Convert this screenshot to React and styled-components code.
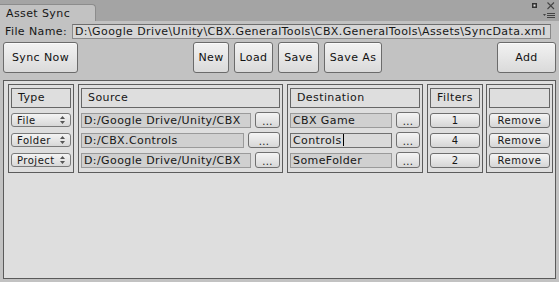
import React from "react";
import styled, { createGlobalStyle } from "styled-components";

const Global = createGlobalStyle`
  html, body { margin: 0; padding: 0; }
  body {
    width: 559px;
    height: 282px;
    overflow: hidden;
    font-family: "DejaVu Sans", Verdana, sans-serif;
    color: #161616;
  }
`;

const rows = [
  { type: "File", source: "D:/Google Drive/Unity/CBX", dest: "CBX Game", filters: 1, wide: false },
  { type: "Folder", source: "D:/CBX.Controls", dest: "Controls", filters: 4, wide: true, caret: true },
  { type: "Project", source: "D:/Google Drive/Unity/CBX", dest: "SomeFolder", filters: 2, wide: false },
];

function SortArrows() {
  return (
    <svg width="5" height="8" viewBox="0 0 5 8">
      <path d="M2.5 0 L5 3 L0 3 Z M0 5 L5 5 L2.5 8 Z" fill="#555" />
    </svg>
  );
}

function WindowIcons() {
  return (
    <IconBox>
      <svg width="28" height="20" viewBox="0 0 28 20">
        <rect x="3.5" y="3.5" width="4" height="4" fill="#333" stroke="#333" />
        <rect x="4.5" y="4.5" width="2" height="2" fill="#ddd" />
        <path d="M18.5 2.5 L25 9 M25 2.5 L18.5 9" stroke="#444" strokeWidth="1.1" />
        <path d="M14 14 L17 14 L15.5 16 Z" fill="#444" />
        <path d="M18 13.5 H26 M18 15.5 H26 M18 17.5 H26" stroke="#444" strokeWidth="1" />
      </svg>
    </IconBox>
  );
}

export default function App() {
  return (
    <Window>
      <Global />
      <TitleBar>
        <Tab>Asset Sync</Tab>
        <WindowIcons />
      </TitleBar>
      <FileRow>
        <Label>File Name:</Label>
        <PathField>D:\Google Drive\Unity\CBX.GeneralTools\CBX.GeneralTools\Assets\SyncData.xml</PathField>
      </FileRow>
      <Toolbar>
        <BigButton $w={75}>Sync Now</BigButton>
        <ButtonGroup>
          <BigButton $w={36}>New</BigButton>
          <BigButton $w={39}>Load</BigButton>
          <BigButton $w={41}>Save</BigButton>
          <BigButton $w={58}>Save As</BigButton>
        </ButtonGroup>
        <BigButton $w={59} $right>Add</BigButton>
      </Toolbar>
      <Panel>
        <Column $w={66}>
          <Header>Type</Header>
          {rows.map((r) => (
            <Row key={r.type}>
              <Dropdown>
                <span>{r.type}</span>
                <SortArrows />
              </Dropdown>
            </Row>
          ))}
        </Column>
        <Column $w={205}>
          <Header>Source</Header>
          {rows.map((r, i) => (
            <Row key={i}>
              <Field>{r.source}</Field>
              <DotsButton $w={r.wide ? 32 : 25}>...</DotsButton>
            </Row>
          ))}
        </Column>
        <Column $w={136}>
          <Header>Destination</Header>
          {rows.map((r, i) => (
            <Row key={i}>
              <Field $active={r.caret}>
                {r.dest}
                {r.caret && <Caret />}
              </Field>
              <DotsButton $w={24}>...</DotsButton>
            </Row>
          ))}
        </Column>
        <Column $w={56}>
          <Header $center>Filters</Header>
          {rows.map((r, i) => (
            <Row key={i}>
              <MiniButton>{r.filters}</MiniButton>
            </Row>
          ))}
        </Column>
        <Column $w={67} $gap={3}>
          <Header />
          {rows.map((r, i) => (
            <Row key={i}>
              <MiniButton $spaced>Remove</MiniButton>
            </Row>
          ))}
        </Column>
      </Panel>
    </Window>
  );
}

const Window = styled.div`
  width: 559px;
  height: 282px;
  background: #c2c2c2;
  display: flex;
  flex-direction: column;
  font-size: 11px;
  letter-spacing: 0.4px;
`;

const TitleBar = styled.div`
  height: 21px;
  background: #a4a4a4;
  display: flex;
  align-items: flex-end;
  position: relative;
`;

const Tab = styled.div`
  width: 96px;
  height: 17px;
  box-sizing: border-box;
  background: #c2c2c2;
  border-top: 1px solid #8c8c8c;
  border-right: 1px solid #8c8c8c;
  border-top-right-radius: 4px;
  padding: 2px 0 0 6px;
  font-size: 11px;
  line-height: 13px;
`;

const IconBox = styled.div`
  position: absolute;
  top: 0;
  right: 2px;
  height: 20px;
`;

const FileRow = styled.div`
  height: 20px;
  display: flex;
  align-items: center;
  padding: 0 8px 0 5px;
`;

const Label = styled.div`
  width: 67px;
  flex: none;
`;

const PathField = styled.div`
  flex: 1;
  height: 15px;
  box-sizing: border-box;
  background: #d6d6d6;
  border: 1px solid #8a8a8a;
  border-top-color: #6e6e6e;
  padding-left: 2px;
  line-height: 13px;
  white-space: nowrap;
  overflow: hidden;
`;

const Toolbar = styled.div`
  display: flex;
  align-items: center;
  padding: 0 3px;
  height: 32px;
`;

const ButtonGroup = styled.div`
  display: flex;
  gap: 5px;
  margin-left: 115px;
`;

const BigButton = styled.button`
  width: ${(p) => p.$w}px;
  height: 31px;
  margin-left: ${(p) => (p.$right ? "auto" : "0")};
  box-sizing: border-box;
  border: 1px solid #6b6b6b;
  border-radius: 3px;
  background: linear-gradient(#f2f2f2, #dadada);
  box-shadow: inset 0 1px 0 #fafafa;
  font-family: inherit;
  font-size: 11px;
  letter-spacing: 0.4px;
  color: #111;
  padding: 0;
`;

const Panel = styled.div`
  margin: 7px 3px 3px 3px;
  flex: 1;
  box-sizing: border-box;
  background: #dedede;
  border: 1px solid #5a5a5a;
  padding: 3px 4px;
  display: flex;
  align-items: flex-start;
  gap: 4px;
`;

const Column = styled.div`
  width: ${(p) => p.$w}px;
  flex: none;
  box-sizing: border-box;
  border: 1px solid #5c5c5c;
  padding: 3px 2px 4px 2px;
  display: flex;
  flex-direction: column;
  gap: 4px;
  margin-left: ${(p) => (p.$gap ? p.$gap - 4 : 0)}px;
`;

const Header = styled.div`
  height: 20px;
  box-sizing: border-box;
  border: 1px solid #666;
  background: #dedede;
  padding-left: ${(p) => (p.$center ? 0 : 6)}px;
  text-align: ${(p) => (p.$center ? "center" : "left")};
  line-height: 18px;
  font-size: 11px;
`;

const Row = styled.div`
  height: 16px;
  display: flex;
  align-items: center;
  gap: 4px;
`;

const Dropdown = styled.div`
  width: 100%;
  height: 14px;
  box-sizing: border-box;
  border: 1px solid #7a7a7a;
  border-radius: 3px;
  background: linear-gradient(#f4f4f4, #d8d8d8);
  display: flex;
  align-items: center;
  justify-content: space-between;
  padding: 0 5px 0 5px;
  font-size: 10px;
  letter-spacing: 0.5px;
`;

const Field = styled.div`
  flex: 1;
  min-width: 0;
  height: 15px;
  box-sizing: border-box;
  background: ${(p) => (p.$active ? "#dadada" : "#d0d0d0")};
  border: 1px solid ${(p) => (p.$active ? "#707070" : "#9a9a9a")};
  padding-left: 2px;
  line-height: 13px;
  font-size: 11px;
  white-space: nowrap;
  overflow: hidden;
  display: flex;
  align-items: center;
`;

const Caret = styled.span`
  display: inline-block;
  width: 1px;
  height: 12px;
  background: #000;
  margin-left: 1px;
`;

const DotsButton = styled.div`
  width: ${(p) => p.$w}px;
  flex: none;
  height: 16px;
  box-sizing: border-box;
  border: 1px solid #707070;
  border-radius: 3px;
  background: linear-gradient(#f4f4f4, #d8d8d8);
  text-align: center;
  font-size: 10px;
  line-height: 18px;
`;

const MiniButton = styled.div`
  width: 100%;
  height: 15px;
  box-sizing: border-box;
  border: 1px solid #6e6e6e;
  border-radius: 3px;
  background: linear-gradient(#f4f4f4, #d6d6d6);
  text-align: center;
  font-size: 10px;
  line-height: 13px;
  letter-spacing: ${(p) => (p.$spaced ? "0.6px" : "0")};
`;
